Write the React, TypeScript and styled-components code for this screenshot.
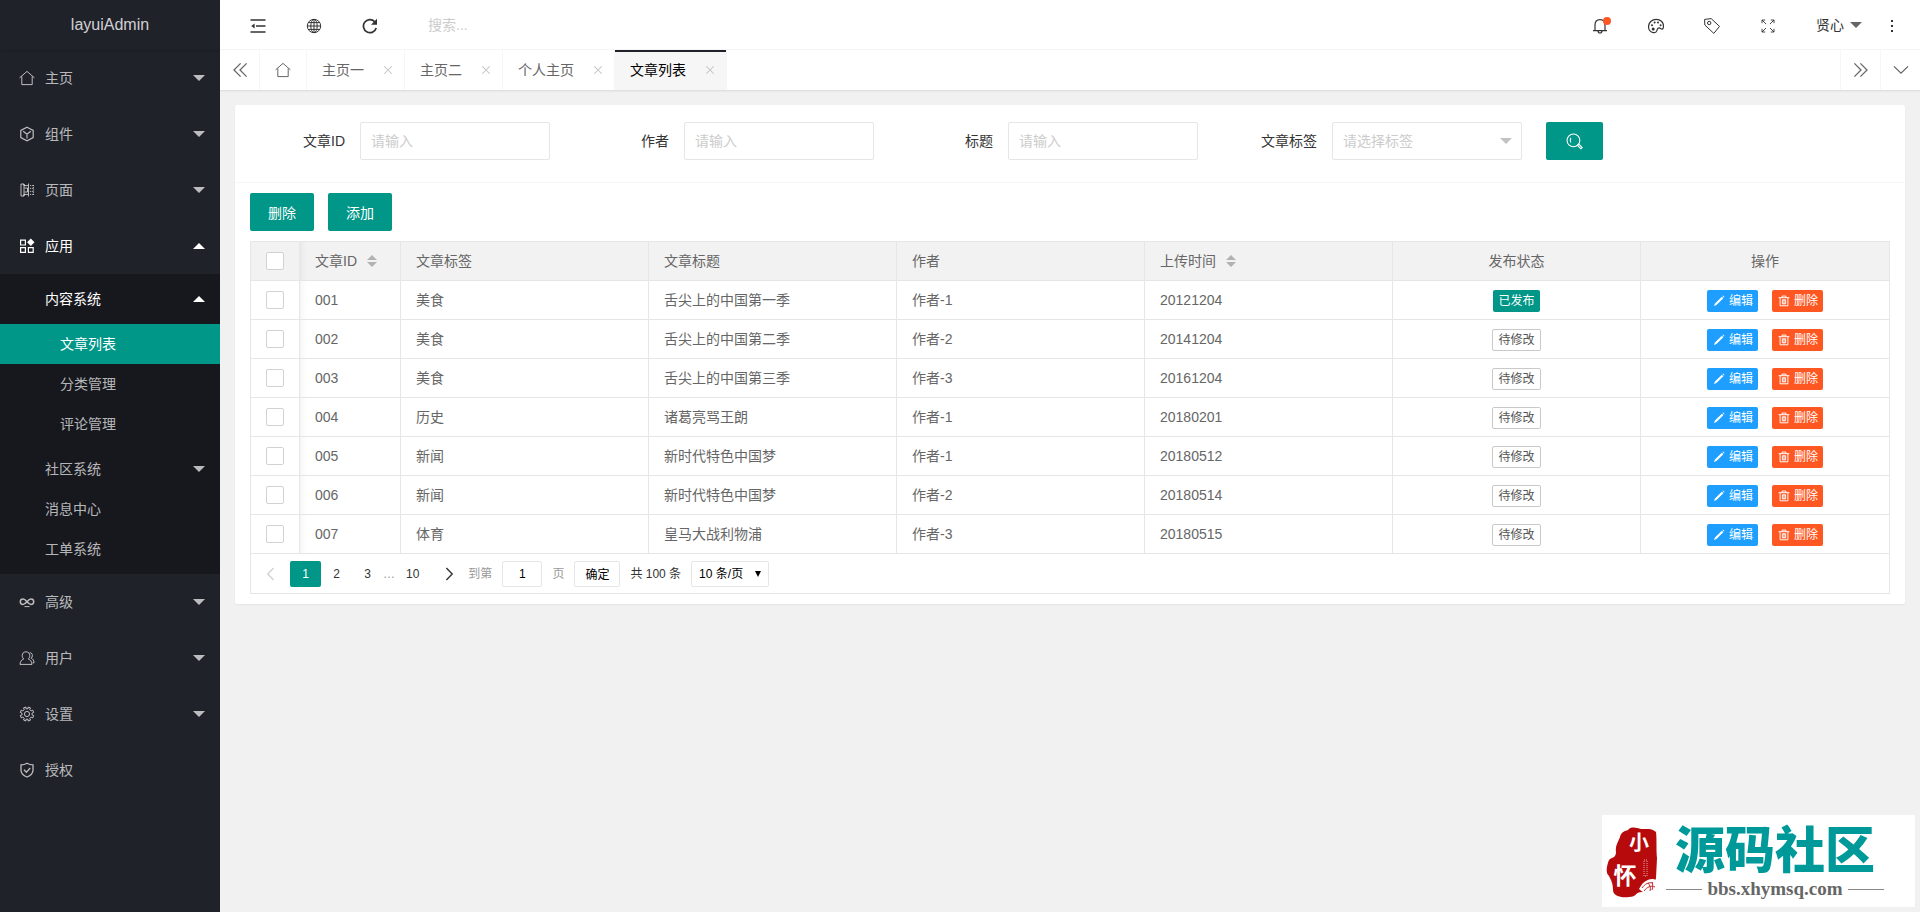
import React from "react";
import styled, { createGlobalStyle, css } from "styled-components";

const TEAL = "#009688";
const FONT = '"Liberation Sans", "Noto Sans CJK SC", sans-serif';

const GlobalStyle = createGlobalStyle`
  *, *::before, *::after { box-sizing: border-box; }
  body { margin: 0; background: #f1f1f1; color: #333; font-family: ${FONT}; font-size: 14px; line-height: 24px; }
  a { color: inherit; text-decoration: none; }
  button, input, select { font-family: inherit; font-size: 14px; margin: 0; }
  ul { list-style: none; margin: 0; padding: 0; }
  svg { display: block; flex: none; }
`;

/* ---------- icons ---------- */

const ICONS: Record<string, React.ReactNode> = {
  home: <path d="M.6 7.800 8 1.400l7.400 6.400M2.800 6.400v8.200h10.400V6.400" />,
  cube: <path d="M8 1.200 14.200 4.400v7.200L8 14.800 1.800 11.600V4.400ZM4.200 5.200 8 8.200l3.800-3M8 8.200v4.200" strokeWidth="1.200" />,
  template: (
    <>
      <path d="M2 2h3v1.600h4M2 2v12h3v-1.600h4M5 2v12" />
      <path d="M5.500 6h3v4h-3M9.500 1.500v13" />
      <path d="M11 3.600h3.600M11 6.400h3.600M11 9.400h3.600M11 12.400h3.600M14.400 3v10" strokeDasharray="1.200 1" />
    </>
  ),
  apps: (
    <>
      <path d="M1.600 2.200h4.800v4.800H1.600ZM1.600 9.600h4.800v4.800H1.600ZM9.400 9.600h4.800v4.800H9.400Z" strokeWidth="1.200" />
      <path d="m11.800.6 3.700 3.700-3.700 3.700-3.700-3.700Z" fill="currentColor" stroke="none" />
    </>
  ),
  infinity: (
    <>
      <path d="M8 7.700C6.500 5.900 5.500 5 4 5a2.700 2.700 0 0 0 0 5.400C5.500 10.400 6.500 9.400 8 7.700 9.500 5.900 10.500 5 12 5a2.700 2.700 0 0 1 0 5.400c-1.500 0-2.500-1-4-2.700" strokeWidth="1.500" />
      <path d="M5.500 12.600h5" />
    </>
  ),
  user: (
    <>
      <path d="M7 1.800c2.400 0 3.800 1.600 3.800 3.800 0 1.700-.8 2.700-1.600 3.400 2 .8 3.600 2 3.800 5.400H1C1.200 11 2.800 9.800 4.800 9 4 8.300 3.200 7.300 3.200 5.600 3.200 3.400 4.600 1.800 7 1.800Z" />
      <path d="M10.800 2.600c1.600.2 2.600 1.400 2.600 3 0 1.200-.6 2-1.200 2.600 1.600.8 2.800 2 2.900 4.600h-1.400" />
    </>
  ),
  gear: (
    <>
      <path d="m6.800 1 .3 1.800h1.800L9.200 1l2.300.9-.8 1.700 1.400 1.300 1.700-.7.9 2.200-1.700.8v1.700l1.700.7-.9 2.300-1.700-.7-1.400 1.300.8 1.600-2.300 1-.3-1.900H7.100L6.800 15l-2.300-1 .8-1.600-1.400-1.300-1.700.7-.9-2.300L3 8.900V7.200l-1.700-.8.9-2.200 1.700.7 1.400-1.300-.8-1.700Z" />
      <circle cx="8" cy="8" r="2.600" />
    </>
  ),
  shield: <path d="M8 1.200c2 1.200 4 1.600 6 1.600v5.400c0 3.400-2.600 5.400-6 6.800-3.400-1.400-6-3.400-6-6.800V2.800c2 0 4-.4 6-1.600ZM5 7.800l2.400 2.400L11.200 6" strokeWidth="1.300" />,
  fold: (
    <>
      <path d="M.5 2h15M6 8h9.500M.5 14h15" strokeWidth="1.500" />
      <path d="M4.600 5.600v4.800L1.200 8Z" fill="currentColor" stroke="none" />
    </>
  ),
  globe: (
    <>
      <circle cx="8" cy="8" r="6.700" />
      <ellipse cx="8" cy="8" rx="3.200" ry="6.700" />
      <path d="M8 1.300v13.400M1.300 8h13.400M2.400 4.600h11.200M2.400 11.400h11.200" />
    </>
  ),
  refresh: (
    <>
      <path d="M14.200 10A6.500 6.500 0 1 1 12.600 3.600" strokeWidth="1.700" />
      <path d="M15 .8v6H9Z" fill="currentColor" stroke="none" />
    </>
  ),
  bell: <path d="M1 12.600h14M3 12.600V7.200C3 3.800 5 1.600 8 1.600s5 2.200 5 5.600v5.400M6 12.800c0 1.600.8 2.200 2 2.200s2-.6 2-2.200" strokeWidth="1.200" />,
  palette: (
    <>
      <path d="M8.300 1.400c4.200 0 7.200 2.800 7.200 6.600 0 1.800-.5 3.200-1.500 3.100-1.300-.1-1.700-1.400-3.100-1.300-1.600.1-1.600 1.500-2 2.900-.4 1.300-1.600 2.300-3.500 1.900C2.400 14.200.5 11.600.5 8.800c0-4.200 3.400-7.400 7.800-7.400Z" strokeWidth="1.200" />
      <g fill="currentColor" stroke="none">
        <circle cx="4" cy="7.200" r="1" /><circle cx="6.600" cy="4.600" r="1" /><circle cx="10" cy="4.600" r="1" /><circle cx="12.600" cy="7.200" r="1" /><circle cx="5.200" cy="11" r="1.500" />
      </g>
    </>
  ),
  tag: (
    <>
      <path d="M.6 1.400 7.200.6l8.300 7.800-5.700 7L.8 7Z" />
      <circle cx="5.200" cy="5" r="1.700" />
    </>
  ),
  expand: <path d="M2 5.200V2h3.200M2 2l4 4M10.800 2H14v3.200M14 2l-4 4M2 10.800V14h3.200M2 14l4-4M14 10.800V14h-3.200M14 14l-4-4" strokeWidth=".9" />,
  more: (
    <g fill="currentColor" stroke="none">
      <rect x="7" y="2" width="2" height="2" /><rect x="7" y="7" width="2" height="2" /><rect x="7" y="12" width="2" height="2" />
    </g>
  ),
  prevAll: <path d="M8.600 1.400 2 8l6.600 6.600M14.600 1.400 8 8l6.600 6.600" strokeWidth="1.300" />,
  nextAll: <path d="M1.400 1.400 8 8l-6.600 6.600M7.400 1.400 14 8l-6.600 6.600" strokeWidth="1.300" />,
  chevDown: <path d="M1 4.400 8 11.200l7-6.800" strokeWidth="1.300" />,
  chevLeft: <path d="M10.600 2 4.800 8l5.800 6" strokeWidth="1.400" />,
  chevRight: <path d="M5.400 2l5.800 6-5.800 6" strokeWidth="1.400" />,
  close: <path d="m3 3 10 10M13 3 3 13" strokeWidth="1.400" />,
  caretDown: <path d="M2 5h12l-6 6Z" fill="currentColor" stroke="none" />,
  caretUp: <path d="M2 11h12L8 5Z" fill="currentColor" stroke="none" />,
  search: (
    <>
      <circle cx="7" cy="7" r="6" />
      <path d="M4.600 4.600C3.800 5.800 3.800 7.800 4.600 9M10.800 11.600l3.200 3.200 1.200-1.200-3.200-3.200Z" />
    </>
  ),
  pencil: <path d="M1.200 14.800 2.600 11.400 11.800 2.200l2 2-9.200 9.200ZM12.600 1.400l.8-.8 2 2-.8.800Z" fill="currentColor" stroke="none" />,
  trash: <path d="M.8 3.600h14.400M5.400 3.400V1.400h5.200v2M2.800 3.800v10.600h10.400V3.800M5.800 6.400h4.400v5.400H5.800ZM8 6.400v5.400" strokeWidth="1.300" />,
};

const Icon = ({ name, size = 16 }: { name: string; size?: number }) => (
  <svg width={size} height={size} viewBox="0 0 16 16" fill="none" stroke="currentColor" strokeWidth="1" aria-hidden="true">
    {ICONS[name]}
  </svg>
);

/* ---------- sidebar ---------- */

const Shell = styled.div`
  display: flex;
  min-height: 100vh;
`;
const Sidebar = styled.aside`
  flex: none;
  width: 220px;
  background: #20222a;
  color: rgba(255, 255, 255, 0.7);
`;
const Brand = styled.a`
  display: block;
  height: 50px;
  line-height: 50px;
  text-align: center;
  font-size: 16px;
  color: rgba(255, 255, 255, 0.8);
  box-shadow: 0 1px 2px rgba(0, 0, 0, 0.15);
`;
const NavLink = styled.a<{ $open?: boolean }>`
  display: flex;
  align-items: center;
  gap: 10px;
  height: 56px;
  padding: 0 13px 0 19px;
  color: ${(p) => (p.$open ? "#fff" : "inherit")};
`;
const NavText = styled.span`
  flex: 1;
`;
const SubMenu = styled.ul`
  padding: 5px 0;
  background: #17181e;
`;
const SubLink = styled(NavLink)`
  height: 40px;
  padding-left: 45px;
`;
const LeafList = styled.ul`
  padding: 5px 0;
`;
const LeafLink = styled(SubLink)<{ $active?: boolean }>`
  padding-left: 60px;
  ${(p) => p.$active && css`background: ${TEAL}; color: #fff;`}
`;

const SideItem = ({ icon, text, arrow = true, open = false }: { icon: string; text: string; arrow?: boolean; open?: boolean }) => (
  <NavLink href="#" $open={open}>
    <Icon name={icon} />
    <NavText>{text}</NavText>
    {arrow && <Icon name={open ? "caretUp" : "caretDown"} />}
  </NavLink>
);

/* ---------- top bars ---------- */

const Main = styled.div`
  flex: 1;
  min-width: 0;
`;
const TopBar = styled.header`
  display: flex;
  justify-content: space-between;
  height: 50px;
  padding-left: 10px;
  background: #fff;
  border-bottom: 1px solid #f6f6f6;
`;
const BarGroup = styled.div`
  display: flex;
`;
const BarLink = styled.a`
  position: relative;
  display: flex;
  align-items: center;
  justify-content: center;
  gap: 4px;
  width: 56px;
  padding-top: 2px;
`;
const UserLink = styled(BarLink)`
  width: 68px;
  padding: 0 0 0 20px;
  svg { color: #666; }
`;
const Dot = styled.span`
  position: absolute;
  top: 17px;
  right: 17px;
  width: 8px;
  height: 8px;
  border-radius: 50%;
  background: #ff5722;
`;
const SearchInput = styled.input`
  width: 200px;
  padding: 0 0 0 30px;
  border: 0;
  outline: 0;
  background: none;
  &::placeholder { color: #ccc; }
`;
const TabBar = styled.nav`
  position: relative;
  display: flex;
  height: 40px;
  background: #fff;
  color: #666;
  box-shadow: 0 1px 2px rgba(0, 0, 0, 0.1);
`;
const TabControl = styled.button<{ $side: "left" | "right" }>`
  display: flex;
  align-items: center;
  justify-content: center;
  width: 40px;
  padding: 0;
  border: 0;
  border-${(p) => (p.$side === "left" ? "right" : "left")}: 1px solid #f6f6f6;
  background: none;
  color: #666;
`;
const Tabs = styled.ul`
  display: flex;
  flex: 1;
`;
const Tab = styled.li<{ $active?: boolean }>`
  display: flex;
  align-items: center;
  gap: 17px;
  padding: 0 9px 0 15px;
  border-right: 1px solid #f6f6f6;
  ${(p) => p.$active && css`background: #f6f6f6; color: #000; box-shadow: inset 0 2px 0 #20222a;`}
`;
const HomeTab = styled(Tab)`
  padding: 0 15px;
`;
const TabClose = styled.button`
  display: flex;
  padding: 1px;
  border: 0;
  background: none;
  color: #c2c2c2;
`;

/* ---------- content card ---------- */

const Card = styled.main`
  margin: 15px;
  background: #fff;
  border-radius: 2px;
  box-shadow: 0 1px 2px rgba(0, 0, 0, 0.05);
`;
const Filters = styled.form`
  display: flex;
  flex-wrap: wrap;
  gap: 10px 24px;
  padding: 17px 15px 22px;
  border-bottom: 1px solid #f6f6f6;
`;
const Field = styled.div`
  display: flex;
  align-items: center;
`;
const FieldLabel = styled.label`
  width: 110px;
  padding-right: 15px;
  text-align: right;
`;
const controlBox = css`
  border: 1px solid #e6e6e6;
  border-radius: 2px;
  background: #fff;
  outline: 0;
`;
const TextInput = styled.input`
  ${controlBox}
  width: 190px;
  height: 38px;
  padding: 0 10px;
  &::placeholder { color: #ccc; }
`;
const SelectBox = styled.div`
  position: relative;
  color: #c2c2c2;
  svg { position: absolute; right: 8px; top: 11px; pointer-events: none; }
`;
const TagSelect = styled.select`
  ${controlBox}
  appearance: none;
  width: 190px;
  height: 38px;
  padding: 0 10px;
  color: #ccc;
`;
const Button = styled.button`
  display: flex;
  align-items: center;
  justify-content: center;
  height: 38px;
  padding: 0 18px;
  border: 0;
  border-radius: 2px;
  background: ${TEAL};
  color: #fff;
`;
const SearchButton = styled(Button)`
  padding: 0 20px;
`;
const CardBody = styled.section`
  padding: 10px 15px;
`;
const Actions = styled.div`
  display: flex;
  gap: 14px;
  margin-bottom: 10px;
`;
const TableFrame = styled.div`
  border: 1px solid #e6e6e6;
`;
const Table = styled.table`
  width: 100%;
  table-layout: fixed;
  border-collapse: separate;
  border-spacing: 0;
  color: #666;
`;
const cell = css<{ $center?: boolean }>`
  height: 39px;
  padding: 0 15px;
  border-bottom: 1px solid #e6e6e6;
  border-right: 1px solid #e6e6e6;
  font-weight: 400;
  text-align: ${(p) => (p.$center ? "center" : "left")};
  &:last-child { border-right: 0; }
  &:nth-child(2) { box-shadow: inset 8px 0 8px -8px rgba(0, 0, 0, 0.08); }
`;
const Th = styled.th`
  ${cell}
  background: #f2f2f2;
`;
const Td = styled.td`
  ${cell}
`;
const CheckCol = styled.col`
  width: 49px;
`;
const IdCol = styled.col`
  width: 101px;
`;
const Check = styled.input`
  appearance: none;
  display: block;
  width: 18px;
  height: 18px;
  margin: 0;
  border: 1px solid #d2d2d2;
  border-radius: 2px;
  background: #fff;
  &:checked { background: ${TEAL}; border-color: ${TEAL}; }
`;
const HeadText = styled.span`
  display: flex;
  align-items: center;
  gap: 10px;
  color: #666;
  svg { color: #b2b2b2; }
`;
const Row = styled.div`
  display: flex;
  justify-content: center;
  gap: 14px;
  padding-top: 2px;
`;
const Status = styled.button<{ $done: boolean }>`
  height: 22px;
  padding: 0 5px;
  border: ${(p) => (p.$done ? "0" : "1px solid #c9c9c9")};
  border-radius: 2px;
  background: ${(p) => (p.$done ? TEAL : "#fff")};
  color: ${(p) => (p.$done ? "#fff" : "#555")};
  font-size: 12px;
  line-height: 20px;
`;
const RowButton = styled.button<{ $color: string }>`
  display: flex;
  align-items: center;
  gap: 4px;
  height: 22px;
  padding: 0 5px 0 6px;
  border: 0;
  border-radius: 2px;
  background: ${(p) => p.$color};
  color: #fff;
  font-size: 12px;
  line-height: 22px;
`;
const Pager = styled.nav`
  display: flex;
  align-items: center;
  height: 39px;
  padding-left: 1px;
  font-size: 12px;
  color: #333;
`;
const PageLink = styled.a<{ $current?: boolean; $muted?: boolean }>`
  display: flex;
  align-items: center;
  justify-content: center;
  min-width: 31px;
  height: 26px;
  padding: 0 11px;
  border-radius: 2px;
  color: ${(p) => (p.$current ? "#fff" : p.$muted ? "#d2d2d2" : "#333")};
  background: ${(p) => (p.$current ? TEAL : "none")};
`;
const Muted = styled.span`
  color: #999;
`;
const JumpGroup = styled.label`
  display: flex;
  align-items: center;
  gap: 10px;
  color: #999;
`;
const JumpInput = styled.input`
  ${controlBox}
  width: 40px;
  height: 26px;
  padding: 0;
  text-align: center;
  font-size: 12px;
  color: #000;
`;
const JumpButton = styled.button`
  ${controlBox}
  height: 26px;
  margin: 0 10px;
  padding: 0 10px;
  font-size: 12px;
  color: #000;
`;
const SizeBox = styled.div`
  position: relative;
  margin-left: 10px;
  color: #000;
  svg { position: absolute; right: 7px; top: 9px; pointer-events: none; }
`;
const SizeSelect = styled.select`
  ${controlBox}
  appearance: none;
  width: 78px;
  height: 26px;
  padding: 0 7px;
  font-size: 12px;
  color: #000;
`;

/* ---------- site mark in the corner ---------- */

const Mark = styled.a`
  position: fixed;
  right: 5px;
  bottom: 5px;
  display: flex;
  align-items: center;
  gap: 8px;
  width: 313px;
  height: 92px;
  padding: 4px 31px 0 4px;
  background: #fff;
`;
const MarkText = styled.span`
  display: flex;
  flex: 1;
  flex-direction: column;
  align-items: center;
`;
const MarkTitle = styled.strong`
  font-size: 50px;
  line-height: 52px;
  font-weight: 900;
  color: #009999;
`;
const MarkUrl = styled.span`
  display: flex;
  align-items: center;
  gap: 5px;
  width: 100%;
  font: bold 19px/24px "Liberation Serif", serif;
  color: #666;
  &::before, &::after { content: ""; flex: 1; height: 1px; background: #888; }
`;

const Seal = () => (
  <svg width="52" height="74" viewBox="0 0 52 74" aria-hidden="true">
    <path
      d="M14 11C15 6 19 5 22 4C25 0 31 2 35 3C41 3 46 2 50 6C51 14 50 24 51 32L50 52C48 60 43 64 36 66C29 66 31 71 23 71C15 72 7 70 7 64C7 57 5 54 3 50C-1 47 1 39 3 34C6 31 10 32 10 26C9 20 12 16 14 11Z"
      fill="#b60a0c"
    />
    <g fill="#fff" fontFamily='"Noto Sans CJK SC", sans-serif' fontWeight="700" textAnchor="middle">
      <text x="33" y="24" fontSize="20">小</text>
      <text x="19" y="58" fontSize="23">怀</text>
    </g>
    <path d="M38 34h3v16h-3Z" fill="none" stroke="#e8a0a0" strokeWidth="1" strokeDasharray="1 1" />
    <path d="M33 63c2-3 3-6 7-8 3-2 8-3 11 0 1 4-2 9-6 11-4 2-8 1-12-3Z" fill="#fff" />
    <path d="M36 62c3-4 6-6 11-5M38 65c3-4 7-6 11-4M42 57c2 2 3 5 2 8M46 56c1 3 1 5 0 8" fill="none" stroke="#c0282a" strokeWidth="1" />
  </svg>
);

/* ---------- data ---------- */

const TABS = ["主页一", "主页二", "个人主页", "文章列表"];
const ARTICLES = [
  ["001", "美食", "舌尖上的中国第一季", "作者-1", "20121204", "已发布"],
  ["002", "美食", "舌尖上的中国第二季", "作者-2", "20141204", "待修改"],
  ["003", "美食", "舌尖上的中国第三季", "作者-3", "20161204", "待修改"],
  ["004", "历史", "诸葛亮骂王朗", "作者-1", "20180201", "待修改"],
  ["005", "新闻", "新时代特色中国梦", "作者-1", "20180512", "待修改"],
  ["006", "新闻", "新时代特色中国梦", "作者-2", "20180514", "待修改"],
  ["007", "体育", "皇马大战利物浦", "作者-3", "20180515", "待修改"],
];

const SortIcon = () => (
  <svg width="10" height="14" viewBox="0 0 10 14" aria-hidden="true">
    <path d="M0 6h10L5 1ZM0 8h10l-5 5Z" fill="currentColor" />
  </svg>
);

export default function App() {
  return (
    <>
      <GlobalStyle />
      <Shell>
        <Sidebar>
          <Brand href="#">layuiAdmin</Brand>
          <ul>
            <li><SideItem icon="home" text="主页" /></li>
            <li><SideItem icon="cube" text="组件" /></li>
            <li><SideItem icon="template" text="页面" /></li>
            <li>
              <SideItem icon="apps" text="应用" open />
              <SubMenu>
                <li>
                  <SubLink href="#" $open><NavText>内容系统</NavText><Icon name="caretUp" /></SubLink>
                  <LeafList>
                    <li><LeafLink href="#" $active>文章列表</LeafLink></li>
                    <li><LeafLink href="#">分类管理</LeafLink></li>
                    <li><LeafLink href="#">评论管理</LeafLink></li>
                  </LeafList>
                </li>
                <li><SubLink href="#"><NavText>社区系统</NavText><Icon name="caretDown" /></SubLink></li>
                <li><SubLink href="#">消息中心</SubLink></li>
                <li><SubLink href="#">工单系统</SubLink></li>
              </SubMenu>
            </li>
            <li><SideItem icon="infinity" text="高级" /></li>
            <li><SideItem icon="user" text="用户" /></li>
            <li><SideItem icon="gear" text="设置" /></li>
            <li><SideItem icon="shield" text="授权" arrow={false} /></li>
          </ul>
        </Sidebar>

        <Main>
          <TopBar>
            <BarGroup>
              <BarLink href="#" aria-label="侧边伸缩"><Icon name="fold" /></BarLink>
              <BarLink href="#" aria-label="前台"><Icon name="globe" /></BarLink>
              <BarLink href="#" aria-label="刷新"><Icon name="refresh" /></BarLink>
              <SearchInput type="text" placeholder="搜索..." aria-label="搜索" />
            </BarGroup>
            <BarGroup>
              <BarLink href="#" aria-label="消息"><Icon name="bell" /><Dot /></BarLink>
              <BarLink href="#" aria-label="主题"><Icon name="palette" /></BarLink>
              <BarLink href="#" aria-label="便签"><Icon name="tag" /></BarLink>
              <BarLink href="#" aria-label="全屏"><Icon name="expand" /></BarLink>
              <UserLink href="#">贤心<Icon name="caretDown" /></UserLink>
              <BarLink href="#" aria-label="更多"><Icon name="more" /></BarLink>
            </BarGroup>
          </TopBar>

          <TabBar>
            <TabControl $side="left" aria-label="向左"><Icon name="prevAll" /></TabControl>
            <Tabs>
              <HomeTab><a href="#" aria-label="主页"><Icon name="home" /></a></HomeTab>
              {TABS.map((t) => (
                <Tab key={t} $active={t === "文章列表"}>
                  <a href="#">{t}</a>
                  <TabClose aria-label="关闭"><Icon name="close" size={12} /></TabClose>
                </Tab>
              ))}
            </Tabs>
            <TabControl $side="right" aria-label="向右"><Icon name="nextAll" /></TabControl>
            <TabControl $side="right" aria-label="标签操作"><Icon name="chevDown" /></TabControl>
          </TabBar>

          <Card>
            <Filters>
              <Field>
                <FieldLabel htmlFor="f-id">文章ID</FieldLabel>
                <TextInput id="f-id" placeholder="请输入" />
              </Field>
              <Field>
                <FieldLabel htmlFor="f-author">作者</FieldLabel>
                <TextInput id="f-author" placeholder="请输入" />
              </Field>
              <Field>
                <FieldLabel htmlFor="f-title">标题</FieldLabel>
                <TextInput id="f-title" placeholder="请输入" />
              </Field>
              <Field>
                <FieldLabel htmlFor="f-tag">文章标签</FieldLabel>
                <SelectBox>
                  <TagSelect id="f-tag" defaultValue="">
                    <option value="">请选择标签</option>
                    <option>美食</option>
                    <option>新闻</option>
                    <option>历史</option>
                    <option>体育</option>
                  </TagSelect>
                  <Icon name="caretDown" />
                </SelectBox>
              </Field>
              <SearchButton type="button" aria-label="查询"><Icon name="search" size={17} /></SearchButton>
            </Filters>

            <CardBody>
              <Actions>
                <Button>删除</Button>
                <Button>添加</Button>
              </Actions>
              <TableFrame>
                <Table>
                  <colgroup>
                    <CheckCol /><IdCol /><col /><col /><col /><col /><col /><col />
                  </colgroup>
                  <thead>
                    <tr>
                      <Th><Check type="checkbox" aria-label="全选" /></Th>
                      <Th><HeadText>文章ID<SortIcon /></HeadText></Th>
                      <Th>文章标签</Th>
                      <Th>文章标题</Th>
                      <Th>作者</Th>
                      <Th><HeadText>上传时间<SortIcon /></HeadText></Th>
                      <Th $center>发布状态</Th>
                      <Th $center>操作</Th>
                    </tr>
                  </thead>
                  <tbody>
                    {ARTICLES.map(([id, tag, title, author, time, status]) => (
                      <tr key={id}>
                        <Td><Check type="checkbox" aria-label={id} /></Td>
                        <Td>{id}</Td>
                        <Td>{tag}</Td>
                        <Td>{title}</Td>
                        <Td>{author}</Td>
                        <Td>{time}</Td>
                        <Td $center><Row><Status $done={status === "已发布"}>{status}</Status></Row></Td>
                        <Td $center>
                          <Row>
                            <RowButton $color="#1e9fff"><Icon name="pencil" size={12} />编辑</RowButton>
                            <RowButton $color="#ff5722"><Icon name="trash" size={12} />删除</RowButton>
                          </Row>
                        </Td>
                      </tr>
                    ))}
                  </tbody>
                </Table>
                <Pager>
                  <PageLink href="#" $muted aria-label="上一页"><Icon name="chevLeft" /></PageLink>
                  <PageLink href="#" $current>1</PageLink>
                  <PageLink href="#">2</PageLink>
                  <PageLink href="#">3</PageLink>
                  <Muted>…</Muted>
                  <PageLink href="#">10</PageLink>
                  <PageLink href="#" aria-label="下一页"><Icon name="chevRight" /></PageLink>
                  <JumpGroup>到第<JumpInput type="text" defaultValue="1" />页</JumpGroup>
                  <JumpButton>确定</JumpButton>
                  <span>共 100 条</span>
                  <SizeBox>
                    <SizeSelect aria-label="每页条数">
                      <option>10 条/页</option>
                      <option>20 条/页</option>
                      <option>30 条/页</option>
                    </SizeSelect>
                    <svg width="8" height="8" viewBox="0 0 8 8" aria-hidden="true"><path d="M1 1h6L4 7Z" fill="currentColor" /></svg>
                  </SizeBox>
                </Pager>
              </TableFrame>
            </CardBody>
          </Card>
        </Main>
      </Shell>

      <Mark href="#">
        <Seal />
        <MarkText>
          <MarkTitle>源码社区</MarkTitle>
          <MarkUrl>bbs.xhymsq.com</MarkUrl>
        </MarkText>
      </Mark>
    </>
  );
}
